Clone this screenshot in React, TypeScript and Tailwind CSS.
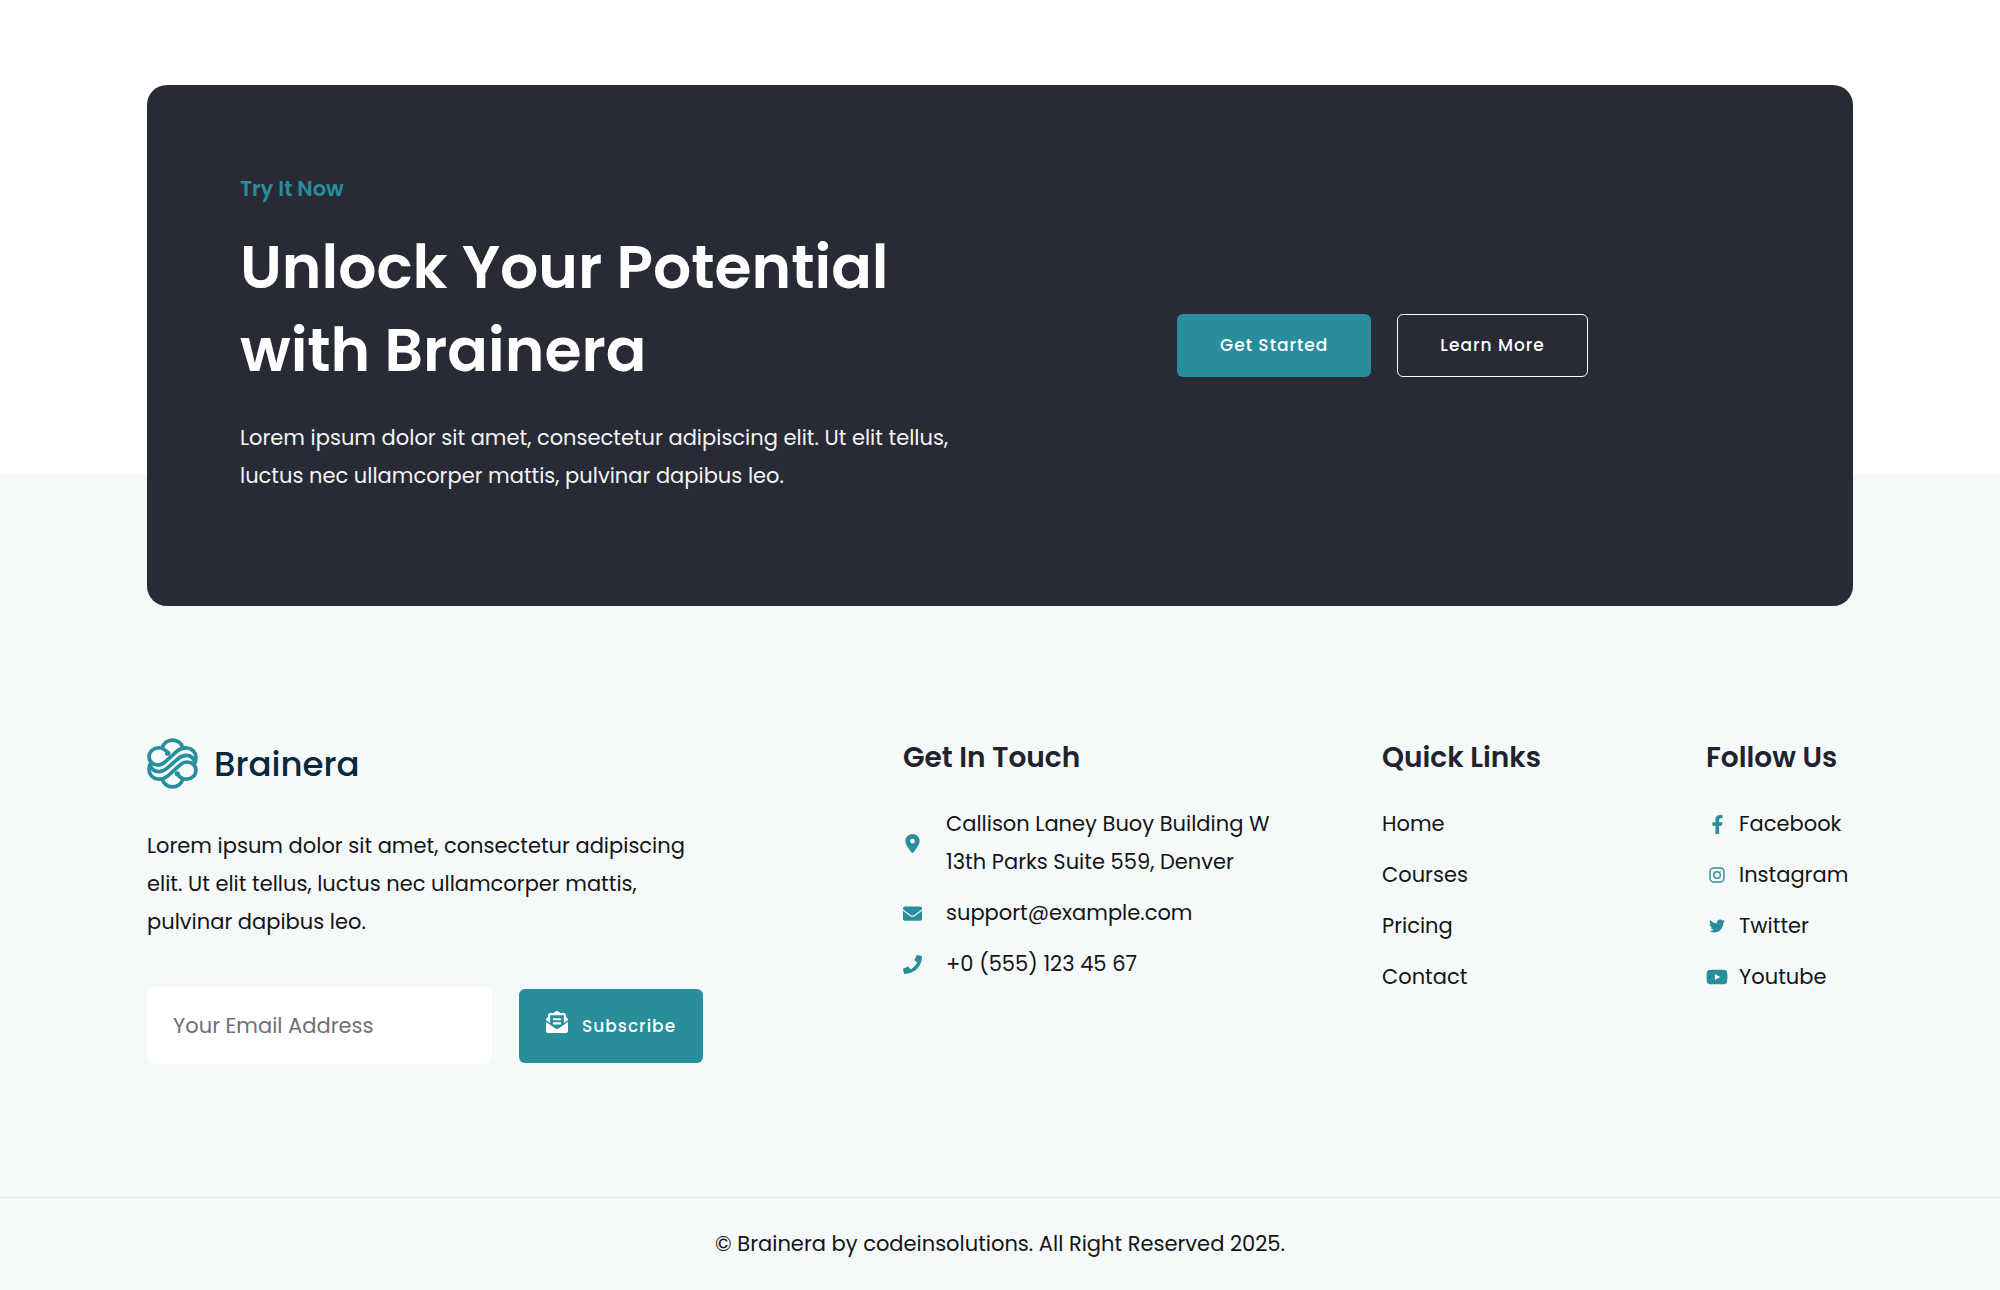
import { FaEnvelope, FaEnvelopeOpenText, FaFacebookF, FaPhone, FaTwitter, FaYoutube } from "react-icons/fa"
import { FaLocationDot } from "react-icons/fa6"

const quickLinks = ["Home", "Courses", "Pricing", "Contact"]

const socials = [
  { name: "Facebook", icon: <FaFacebookF className="size-[19px]" /> },
  { name: "Instagram", icon: <InstagramIcon /> },
  { name: "Twitter", icon: <FaTwitter className="size-4" /> },
  { name: "Youtube", icon: <FaYoutube className="size-[22px]" /> },
]

function InstagramIcon() {
  return (
    <svg viewBox="0 0 16 16" className="size-4" fill="none" stroke="currentColor" strokeWidth="1.4">
      <rect x="1" y="1" width="14" height="14" rx="3.8" />
      <circle cx="8" cy="8" r="3.3" />
      <circle cx="11.9" cy="4.1" r="0.6" fill="currentColor" stroke="none" />
    </svg>
  )
}

function LogoHalf() {
  return (
    <>
      <path d="M15 9.8C16 5.2 20 2 25 2s9 3.2 10 7.8" />
      <path d="M20.3 15C18.5 11.5 15 9.5 11 9.6C6 9.8 2 13.5 2 18.3C2 22.8 6 26.5 10.5 26.5C13.4 26.5 15.5 25.4 17.5 23.6L29.5 12.9C32.5 10.4 35.5 9.5 39.5 9.8C44.3 10.2 48 14 48 18.8C48 21.2 47.6 23.3 46.6 25" />
      <circle cx="20.3" cy="14.9" r="2.6" fill="currentColor" stroke="none" />
    </>
  )
}

function Logo() {
  return (
    <a href="#" className="flex items-center gap-4 text-[#298e9c]">
      <svg viewBox="0 0 50 50" className="size-[51px]" fill="none" stroke="currentColor" strokeWidth="3.6">
        <LogoHalf />
        <g transform="rotate(180 25 25)">
          <LogoHalf />
        </g>
        <path d="M2.6 25C4 30.5 7.5 33 11.5 33C15 33 17.5 31.5 19.5 29.8L30.5 20.2C32.5 18.5 35 17 38.5 17C42.5 17 46 19.5 47.4 25" />
      </svg>
      <span className="text-[34px] font-medium text-[#06283d]">Brainera</span>
    </a>
  )
}

export default function App() {
  return (
    <div className="min-h-screen bg-white font-[Poppins,Inter,sans-serif] text-[21px] leading-[38px] text-[#141414]">
      {/* CTA */}
      <section className="relative px-[147px] pt-[85px]">
        <div className="grid grid-cols-[937fr_583fr] items-center rounded-[20px] bg-[#282a35] px-[93px] pt-[85px] pb-[111px] text-white">
          <div>
            <p className="font-semibold text-[#298e9c]">Try It Now</p>
            <h2 className="mt-[18px] text-[60px] font-semibold leading-[83px]">
              Unlock Your Potential
              <br />
              with Brainera
            </h2>
            <p className="mt-[27px] max-w-[740px] text-gray-100">
              Lorem ipsum dolor sit amet, consectetur adipiscing elit. Ut elit tellus, luctus nec
              ullamcorper mattis, pulvinar dapibus leo.
            </p>
          </div>

          <div className="mt-[25px] flex gap-[26px] text-[17px] font-medium leading-[21px] tracking-[1px]">
            <button type="button" className="rounded-md bg-[#298e9c] px-[43px] py-[21px]">
              Get Started
            </button>
            <button type="button" className="rounded-md border border-white px-[42px] py-5">
              Learn More
            </button>
          </div>
        </div>
      </section>

      {/* FOOTER */}
      <footer className="-mt-[131px] bg-[#f5f9fa] pt-[263px]">
        <div className="grid grid-cols-[756fr_479fr_324fr_147fr] px-[147px] pb-[133px]">
          <div>
            <Logo />
            <p className="mt-[38px] max-w-[560px]">
              Lorem ipsum dolor sit amet, consectetur adipiscing elit. Ut elit tellus, luctus nec
              ullamcorper mattis, pulvinar dapibus leo.
            </p>
            <form className="mt-[46px] flex items-center gap-[27px]" onSubmit={e => e.preventDefault()}>
              <input
                type="email"
                aria-label="Your Email Address"
                placeholder="Your Email Address"
                className="h-[77px] w-[345px] rounded-lg bg-white px-[26px] outline-none placeholder:text-[#6f6f6f]"
              />
              <button
                type="submit"
                className="flex h-[74px] items-center gap-[14px] rounded-md bg-[#298e9c] px-[27px] text-[17px] font-medium tracking-[1px] text-white"
              >
                <FaEnvelopeOpenText className="mb-2 size-[22px]" />
                Subscribe
              </button>
            </form>
          </div>

          <div>
            <h3 className="text-[28px] font-semibold leading-10 text-[#20222c]">Get In Touch</h3>
            <ul className="mt-[27px] space-y-[13px]">
              <li className="flex items-center gap-6">
                <FaLocationDot className="size-[19px] text-[#298e9c]" />
                <span>
                  Callison Laney Buoy Building W
                  <br />
                  13th Parks Suite 559, Denver
                </span>
              </li>
              <li className="flex items-center gap-6">
                <FaEnvelope className="size-[19px] text-[#298e9c]" />
                <a href="mailto:support@example.com">support@example.com</a>
              </li>
              <li className="flex items-center gap-6">
                <FaPhone className="size-[19px] text-[#298e9c]" />
                <a href="tel:+05551234567">+0 (555) 123 45 67</a>
              </li>
            </ul>
          </div>

          <div>
            <h3 className="text-[28px] font-semibold leading-10 text-[#20222c]">Quick Links</h3>
            <ul className="mt-[27px] space-y-[13px]">
              {quickLinks.map(link => (
                <li key={link}>
                  <a href="#">{link}</a>
                </li>
              ))}
            </ul>
          </div>

          <div>
            <h3 className="whitespace-nowrap text-[28px] font-semibold leading-10 text-[#20222c]">Follow Us</h3>
            <ul className="mt-[27px] space-y-[13px]">
              {socials.map(social => (
                <li key={social.name}>
                  <a href="#" className="flex items-center gap-[11px]">
                    <span className="flex w-[22px] justify-center text-[#298e9c]">{social.icon}</span>
                    {social.name}
                  </a>
                </li>
              ))}
            </ul>
          </div>
        </div>

        <div className="border-t border-[#e4e9ea] py-[27px] text-center">
          © Brainera by codeinsolutions. All Right Reserved 2025.
        </div>
      </footer>
    </div>
  )
}
